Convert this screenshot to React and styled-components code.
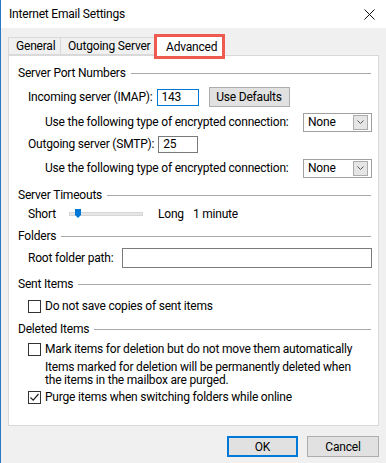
import React from 'react'
import styled, { createGlobalStyle } from 'styled-components'

const GlobalStyle = createGlobalStyle`
  html, body {
    margin: 0;
    padding: 0;
    background: #f0f0f0;
  }
  body {
    font-family: Roboto, Lato, "Noto Sans", sans-serif;
    font-size: 12px;
    letter-spacing: -0.2px;
    color: #000;
  }
`

const Window = styled.div`
  width: 386px;
  height: 463px;
  box-sizing: border-box;
  border-left: 1px solid #2b79c2;
  background: #f0f0f0;
  display: flex;
  flex-direction: column;
  overflow: hidden;
  white-space: nowrap;
`

const TitleBar = styled.div`
  height: 28px;
  background: #fff;
  display: flex;
  align-items: center;
  justify-content: space-between;
  padding: 0 8px 0 8px;
  font-size: 12px;
`

const CloseIcon = styled.svg`
  width: 11px;
  height: 11px;
  margin-right: 3px;
`

const Body = styled.div`
  flex: 1;
  padding: 9px 7px 0 7px;
  display: flex;
  flex-direction: column;
`

const TabRow = styled.div`
  display: flex;
  align-items: flex-end;
  height: 18px;
  position: relative;
  z-index: 1;
`

const Tab = styled.div`
  position: relative;
  box-sizing: border-box;
  width: ${p => p.$w}px;
  height: ${p => (p.$active ? '20px' : '18px')};
  padding-left: ${p => p.$pl}px;
  margin-bottom: ${p => (p.$active ? '-1px' : '0')};
  display: flex;
  align-items: center;
  background: ${p => (p.$active ? '#fff' : '#f0f0f0')};
  border: 1px solid #d9d9d9;
  border-bottom: ${p => (p.$active ? 'none' : '1px solid #d9d9d9')};
  border-left: ${p => (p.$first || p.$active ? '1px solid #d9d9d9' : 'none')};

  ${p =>
    p.$highlight &&
    `
    &::after {
      content: "";
      position: absolute;
      left: -2px;
      right: -2px;
      top: -3px;
      bottom: -3px;
      border: 3px solid #ef5a50;
      pointer-events: none;
    }
  `}
`

const Panel = styled.div`
  box-sizing: border-box;
  height: 371px;
  background: #fff;
  border: 1px solid #d9d9d9;
  padding: 10px 6px 0 9px;
  display: flex;
  flex-direction: column;
`

const Header = styled.div`
  display: flex;
  align-items: center;
  height: 14px;
  margin-top: ${p => p.$mt || 0}px;

  &::after {
    content: "";
    flex: 1;
    height: 1px;
    background: #a8a8a8;
    margin: 1px 1px 0 5px;
  }
`

const Row = styled.div`
  display: flex;
  align-items: center;
  height: ${p => p.$h ?? 14}px;
  margin-top: ${p => p.$mt ?? 0}px;
  padding-left: ${p => p.$indent ?? 10}px;
  gap: ${p => p.$gap ?? 8}px;
`

const Label = styled.span`
  width: ${p => (p.$w ? `${p.$w}px` : 'auto')};
  flex: none;
`

const TextInput = styled.div`
  box-sizing: border-box;
  width: ${p => p.$w}px;
  flex: ${p => (p.$w ? 'none' : 1)};
  height: ${p => p.$h || 17}px;
  border: 1px solid ${p => (p.$focus ? '#0078d7' : '#7a7a7a')};
  background: #fff;
  display: flex;
  align-items: center;
  padding-left: 4px;
`

const Button = styled.div`
  box-sizing: border-box;
  width: ${p => p.$w}px;
  height: ${p => p.$h || 21}px;
  margin-left: ${p => p.$ml || 0}px;
  background: #e1e1e1;
  border: ${p => (p.$default ? '2px solid #0078d7' : '1px solid #adadad')};
  display: flex;
  align-items: center;
  justify-content: center;
`

const Select = styled.div`
  margin-left: auto;
  box-sizing: border-box;
  width: 69px;
  height: 19px;
  border: 1px solid #a0a0a0;
  background: #fff;
  display: flex;
  align-items: center;
  justify-content: space-between;
  padding: 0 3px 0 4px;
`

const DropButton = styled.div`
  box-sizing: border-box;
  width: 15px;
  height: 15px;
  background: #e5e5e5;
  border: 1px solid #acacac;
  display: flex;
  align-items: center;
  justify-content: center;
`

const Track = styled.div`
  position: relative;
  box-sizing: border-box;
  width: 74px;
  height: 4px;
  background: #e7e7e7;
  border: 1px solid #d6d6d6;
  margin-right: 15px;
`

const Thumb = styled.svg`
  position: absolute;
  left: 5px;
  top: -4px;
`

const Spaced = styled.span`
  margin-left: ${p => p.$ml || 0}px;
`

const Box = styled.div`
  box-sizing: border-box;
  width: 13px;
  height: 13px;
  border: 1px solid #333;
  background: #fff;
  display: flex;
  align-items: center;
  justify-content: center;
`

const Note = styled.div`
  margin-top: ${p => p.$mt || 0}px;
  padding-left: 27px;
  line-height: 13px;
`

const Footer = styled.div`
  display: flex;
  justify-content: flex-end;
  gap: 9px;
  margin-top: 10px;
`

const Checkbox = ({ checked, label, mt }) => (
  <Row $mt={mt} $gap={4}>
    <Box>
      {checked && (
        <svg width="11" height="11" viewBox="0 0 11 11">
          <path d="M1.5 5.5 L4.2 8.2 L9.5 2" fill="none" stroke="#222" strokeWidth="1.2" />
        </svg>
      )}
    </Box>
    <span>{label}</span>
  </Row>
)

const Dropdown = () => (
  <Select>
    <span>None</span>
    <DropButton>
      <svg width="7" height="4" viewBox="0 0 7 4">
        <path d="M0.5 0.5 L3.5 3.5 L6.5 0.5" fill="none" stroke="#555" strokeWidth="1" />
      </svg>
    </DropButton>
  </Select>
)

const App = () => {
  return (
    <Window>
      <GlobalStyle />
      <TitleBar>
        <span>Internet Email Settings</span>
        <CloseIcon viewBox="0 0 11 11">
          <path d="M0.5 0.5 L10.5 10.5 M10.5 0.5 L0.5 10.5" stroke="#111" strokeWidth="1" />
        </CloseIcon>
      </TitleBar>
      <Body>
        <TabRow>
          <Tab $first $w={53} $pl={7}>General</Tab>
          <Tab $w={94} $pl={7}>Outgoing Server</Tab>
          <Tab $active $highlight $w={69} $pl={10}>Advanced</Tab>
        </TabRow>
        <Panel>
          <Header>Server Port Numbers</Header>
          <Row $h={20} $mt={7} $gap={4}>
            <Label>Incoming server (IMAP):</Label>
            <TextInput $w={42} $focus>143</TextInput>
            <Button $w={81} $h={20} $ml={6}>Use Defaults</Button>
          </Row>
          <Row $h={20} $mt={5} $indent={27}>
            <span>Use the following type of encrypted connection:</span>
            <Dropdown />
          </Row>
          <Row $h={18} $mt={3} $gap={4}>
            <Label>Outgoing server (SMTP):</Label>
            <TextInput $w={40}>25</TextInput>
          </Row>
          <Row $h={20} $mt={5} $indent={27}>
            <span>Use the following type of encrypted connection:</span>
            <Dropdown />
          </Row>

          <Header $mt={10}>Server Timeouts</Header>
          <Row $mt={5} $gap={0}>
            <Label $w={41}>Short</Label>
            <Track>
              <Thumb width="6" height="9" viewBox="0 0 6 9">
                <path d="M0 0 H6 V6 L3 9 L0 6 Z" fill="#0078d7" />
              </Thumb>
            </Track>
            <span>Long</span>
            <Spaced $ml={9}>1 minute</Spaced>
          </Row>

          <Header $mt={8}>Folders</Header>
          <Row $h={20} $mt={5} $gap={9}>
            <span>Root folder path:</span>
            <TextInput $h={20} />
          </Row>

          <Header $mt={9}>Sent Items</Header>
          <Checkbox mt={8} label="Do not save copies of sent items" />

          <Header $mt={9}>Deleted Items</Header>
          <Checkbox mt={6} label="Mark items for deletion but do not move them automatically" />
          <Note $mt={5}>
            Items marked for deletion will be permanently deleted when
            <br />
            the items in the mailbox are purged.
          </Note>
          <Checkbox mt={3} checked label="Purge items when switching folders while online" />
        </Panel>
        <Footer>
          <Button $w={71} $default>OK</Button>
          <Button $w={72}>Cancel</Button>
        </Footer>
      </Body>
    </Window>
  )
}

export default App
